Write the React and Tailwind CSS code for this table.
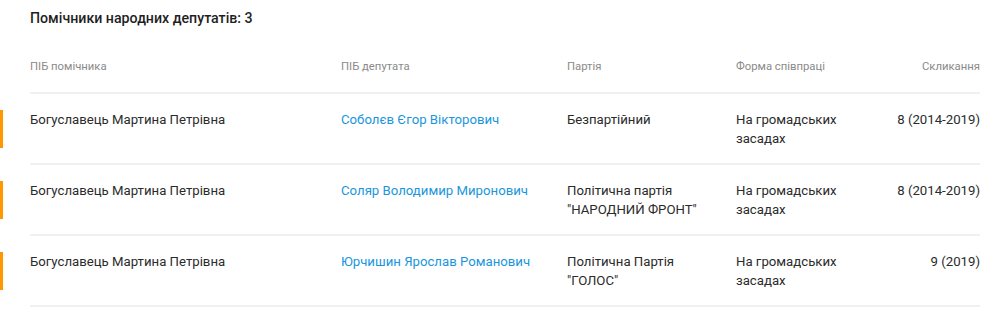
const rows = [
  {
    assistant: "Богуславець Мартина Петрівна",
    deputy: "Соболєв Єгор Вікторович",
    party: "Безпартійний",
    form: "На громадських засадах",
    term: "8 (2014-2019)",
  },
  {
    assistant: "Богуславець Мартина Петрівна",
    deputy: "Соляр Володимир Миронович",
    party: "Політична партія \"НАРОДНИЙ ФРОНТ\"",
    form: "На громадських засадах",
    term: "8 (2014-2019)",
  },
  {
    assistant: "Богуславець Мартина Петрівна",
    deputy: "Юрчишин Ярослав Романович",
    party: "Політична Партія \"ГОЛОС\"",
    form: "На громадських засадах",
    term: "9 (2019)",
  },
]

const cols = "grid grid-cols-[311px_226px_169px_125px_1fr]"

export default function App() {
  return (
    <div className="w-[1004px] h-[318px] bg-white font-['Roboto',sans-serif] text-[#2b2b2b] overflow-hidden">
      <div className="pl-[30px] pr-[24px]">
        <h2 className="pt-2 text-[14.2px] leading-5 font-medium text-[#1f1f1f]">
          Помічники народних депутатів: 3
        </h2>
        <div className={`${cols} mt-[31px] pb-[17px] border-b-2 border-[#eff0f4] text-[11.3px] leading-4 text-[#8a8a8a]`}>
          <div>ПІБ помічника</div>
          <div>ПІБ депутата</div>
          <div>Партія</div>
          <div>Форма співпраці</div>
          <div className="text-right">Скликання</div>
        </div>
      </div>
      {rows.map((r, i) => (
        <div key={i} className="flex">
          <div className="w-[3px] h-[38px] mt-4 bg-[#ff9800] shrink-0" />
          <div className={`${cols} flex-1 ml-[27px] mr-[24px] pt-4 pb-[15px] border-b-2 border-[#eff0f4] text-[13.2px] leading-[19px]`}>
            <div>{r.assistant}</div>
            <div>
              <a href="#" className="text-[#1a96dd]">{r.deputy}</a>
            </div>
            <div className="pr-2">{r.party}</div>
            <div>{r.form}</div>
            <div className="text-right">{r.term}</div>
          </div>
        </div>
      ))}
    </div>
  )
}
